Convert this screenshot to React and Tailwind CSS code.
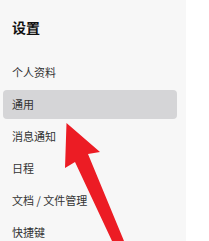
import React from "react";

const items = ["个人资料", "通用", "消息通知", "日程", "文档 / 文件管理", "快捷键"];

export default function App() {
  return (
    <div
      className="relative flex h-[241px] w-[209px] overflow-hidden bg-white"
      style={{ fontFamily: '"Noto Sans CJK SC", "Noto Sans", sans-serif' }}
    >
      <div className="flex w-[186px] flex-col bg-[#f7f7f7] px-[3px]">
        <div className="pl-[9px] pt-[17px] text-[14px] font-bold leading-[20px] text-[#111]">
          设置
        </div>
        <div className="mt-[21px] flex flex-col gap-[3px] pr-[6px]">
          {items.map((t) => (
            <div
              key={t}
              className={
                "flex h-[29px] items-center rounded-[4px] pl-[9px] text-[11px] text-[#333] " +
                (t === "通用" ? "bg-[#d5d5d7]" : "")
              }
            >
              {t}
            </div>
          ))}
        </div>
      </div>
      <svg
        className="pointer-events-none absolute left-0 top-0"
        width="209"
        height="241"
        viewBox="0 0 209 241"
      >
        <polygon
          points="66.5,123 100,152 88,154 124,241 112,241 75,162 65,168"
          fill="#ec1c24"
        />
      </svg>
    </div>
  );
}
